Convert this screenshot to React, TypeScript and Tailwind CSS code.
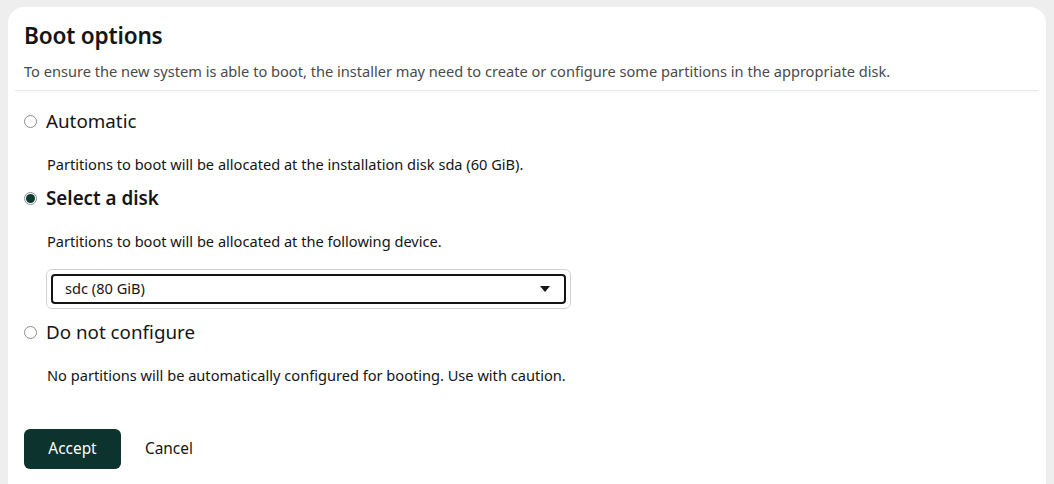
import { useState } from "react";

const font = { fontFamily: '"Noto Sans", "Open Sans", sans-serif' };

type Option = { id: string; label: string; help: string };

const options: Option[] = [
  { id: "auto", label: "Automatic", help: "Partitions to boot will be allocated at the installation disk sda (60 GiB)." },
  { id: "disk", label: "Select a disk", help: "Partitions to boot will be allocated at the following device." },
  { id: "none", label: "Do not configure", help: "No partitions will be automatically configured for booting. Use with caution." },
];

function Radio({ checked }: { checked: boolean }) {
  return checked ? (
    <span className="mt-[1px] flex h-[13px] w-[13px] shrink-0 items-center justify-center rounded-full border border-[#8a8d90] bg-white">
      <span className="h-[9px] w-[9px] rounded-full bg-[#0c3a30]" />
    </span>
  ) : (
    <span className="mt-[1px] h-[13px] w-[13px] shrink-0 rounded-full border border-[#8a8d90] bg-white" />
  );
}

function DiskSelect() {
  return (
    <div className="mt-[7px] mb-[10px] ml-[22px] w-[525px] rounded-md border border-[#d2d2d2] p-1">
      <div className="flex h-[30px] w-full items-center rounded-[4px] border-2 border-[#151515] text-[14.6px]">
        <span className="w-[12px] shrink-0" />
        <span className="flex-1">sdc (80 GiB)</span>
        <svg viewBox="0 0 10 6" className="h-[6px] w-[10px] shrink-0" fill="#151515">
          <path d="M0 0h10L5 6z" />
        </svg>
        <span className="w-[14px] shrink-0" />
      </div>
    </div>
  );
}

export default function App() {
  const [value, setValue] = useState("disk");

  return (
    <div className="h-[484px] overflow-hidden bg-[#eeeeee] px-2 pt-[7px] text-[#151515]" style={font}>
      <div className="h-[600px] rounded-t-2xl bg-white">
        <header className="px-[7px] pt-[12px]">
          <div className="px-[9px] pb-[9px]">
            <h1 className="text-[22.6px] font-semibold leading-[34px] tracking-[-0.2px]">Boot options</h1>
            <p className="mt-[8px] text-[14.6px] leading-[20px] text-[#4a4a4a]">
              To ensure the new system is able to boot, the installer may need to create or configure some partitions in the appropriate disk.
            </p>
          </div>
          <div className="h-px bg-[#eaeaea] shadow-[0_1px_2px_rgba(0,0,0,0.06)]" />
        </header>

        <div className="px-4 pt-[17px]">
          {options.map((o) => {
            const checked = value === o.id;
            return (
              <div key={o.id}>
                <label className="flex cursor-pointer items-center gap-[9px]" onClick={() => setValue(o.id)}>
                  <Radio checked={checked} />
                  <span className={`text-[18.8px] leading-[26px] ${checked ? "font-semibold" : ""}`}>{o.label}</span>
                </label>
                <p className={`pl-[23px] pt-[20px] text-[14.6px] leading-[20px] ${o.id === "none" ? "" : "pb-[11px]"}`}>{o.help}</p>
                {o.id === "disk" && <DiskSelect />}
              </div>
            );
          })}

          <div className="mt-[44px] flex items-center gap-6">
            <button className="h-10 w-[97px] rounded-md bg-[#0c332d] text-[15.4px] text-white">Accept</button>
            <button className="text-[15.4px] text-[#151515]">Cancel</button>
          </div>
        </div>
      </div>
    </div>
  );
}
